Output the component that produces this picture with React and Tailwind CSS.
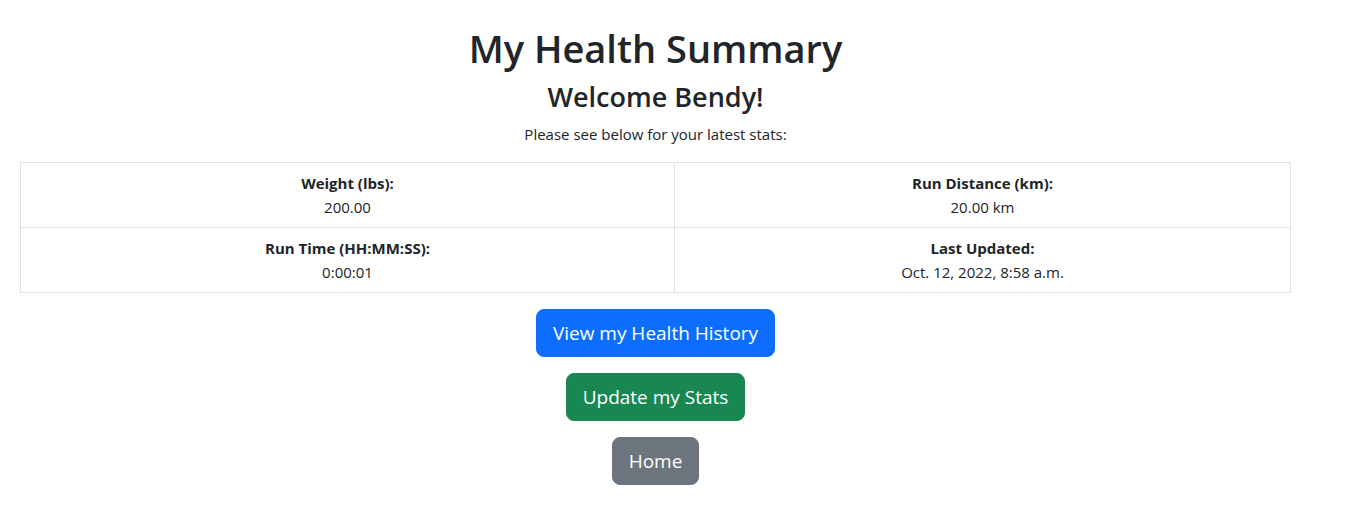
export default function App() {
  const font = { fontFamily: '"Open Sans", "Noto Sans", sans-serif' };
  return (
    <div className="bg-white min-h-[519px] text-[#212529]" style={font}>
      <div className="ml-[20px] w-[1271px] pt-[24px] flex flex-col items-center">
        <h1 className="text-[38px] leading-[48px] font-semibold mb-2">My Health Summary</h1>
        <h3 className="text-[27px] leading-[34px] font-semibold mb-2">Welcome Bendy!</h3>
        <p className="text-[15px] leading-[24px] mb-4">Please see below for your latest stats:</p>
        <table className="w-full border-collapse text-[15px] leading-[24px] mb-4">
          <tbody>
            <tr>
              <td className="w-[654px] border border-[#dee2e6] text-center py-2 px-2">
                <div className="font-bold">Weight (lbs):</div>
                <div>200.00</div>
              </td>
              <td className="border border-[#dee2e6] text-center py-2 px-2">
                <div className="font-bold">Run Distance (km):</div>
                <div>20.00 km</div>
              </td>
            </tr>
            <tr>
              <td className="border border-[#dee2e6] text-center py-2 px-2">
                <div className="font-bold">Run Time (HH:MM:SS):</div>
                <div>0:00:01</div>
              </td>
              <td className="border border-[#dee2e6] text-center py-2 px-2">
                <div className="font-bold">Last Updated:</div>
                <div>Oct. 12, 2022, 8:58 a.m.</div>
              </td>
            </tr>
          </tbody>
        </table>
        <div className="flex flex-col items-center gap-4">
          <button className="bg-[#0d6efd] text-white text-[19px] leading-[30px] px-4 py-2 rounded-lg border border-[#0d6efd]">View my Health History</button>
          <button className="bg-[#198754] text-white text-[19px] leading-[30px] px-4 py-2 rounded-lg border border-[#198754]">Update my Stats</button>
          <button className="bg-[#6c757d] text-white text-[19px] leading-[30px] px-4 py-2 rounded-lg border border-[#6c757d]">Home</button>
        </div>
      </div>
    </div>
  );
}
